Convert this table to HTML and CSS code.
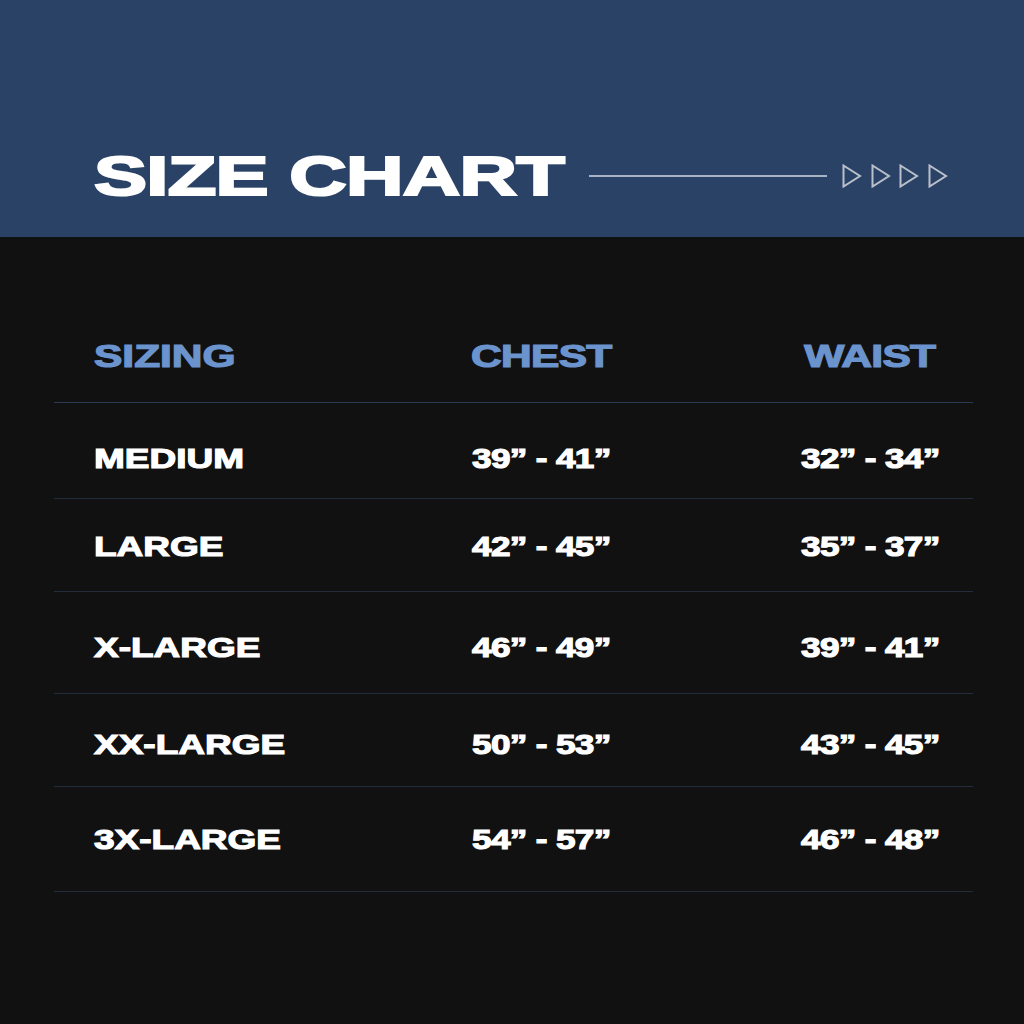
FILE: index.html
```html
<!DOCTYPE html>
<html lang="en">
<head>
<meta charset="utf-8">
<title>Size Chart</title>
<link rel="stylesheet" href="styles.css">
</head>
<body>
<div class="page">
  <header class="banner">
    <div class="title"><span class="wide">SIZE CHART</span></div>
    <div class="rule"></div>
    <svg class="arrows" width="110" height="24" viewBox="0 0 110 24" aria-hidden="true">
      <g fill="none" stroke="#b9c0cb" stroke-width="2" stroke-linejoin="miter">
        <polygon points="1.5,1.5 18,12 1.5,22.5"/>
        <polygon points="30.5,1.5 47,12 30.5,22.5"/>
        <polygon points="58.5,1.5 75,12 58.5,22.5"/>
        <polygon points="87.5,1.5 104,12 87.5,22.5"/>
      </g>
    </svg>
  </header>
  <section class="chart">
    <div class="row head">
      <div class="cell c1"><span class="wide">SIZING</span></div>
      <div class="cell c2"><span class="wide">CHEST</span></div>
      <div class="cell c3"><span class="wide">WAIST</span></div>
    </div>
    <div class="row">
      <div class="cell c1"><span class="wide">MEDIUM</span></div>
      <div class="cell c2"><span class="wide">39” - 41”</span></div>
      <div class="cell c3"><span class="wide">32” - 34”</span></div>
    </div>
    <div class="row">
      <div class="cell c1"><span class="wide">LARGE</span></div>
      <div class="cell c2"><span class="wide">42” - 45”</span></div>
      <div class="cell c3"><span class="wide">35” - 37”</span></div>
    </div>
    <div class="row">
      <div class="cell c1"><span class="wide">X-LARGE</span></div>
      <div class="cell c2"><span class="wide">46” - 49”</span></div>
      <div class="cell c3"><span class="wide">39” - 41”</span></div>
    </div>
    <div class="row">
      <div class="cell c1"><span class="wide">XX-LARGE</span></div>
      <div class="cell c2"><span class="wide">50” - 53”</span></div>
      <div class="cell c3"><span class="wide">43” - 45”</span></div>
    </div>
    <div class="row">
      <div class="cell c1"><span class="wide">3X-LARGE</span></div>
      <div class="cell c2"><span class="wide">54” - 57”</span></div>
      <div class="cell c3"><span class="wide">46” - 48”</span></div>
    </div>
  </section>
</div>
</body>
</html>
```

FILE: styles.css
```css
* { box-sizing: border-box; }
html, body { margin: 0; padding: 0; }
body {
  width: 1024px;
  height: 1024px;
  background: #111111;
  font-family: "Liberation Sans", Arial, sans-serif;
  font-weight: 700;
  color: #ffffff;
  overflow: hidden;
}
.page { width: 1024px; height: 1024px; background: #111111; }

.banner {
  height: 237px;
  background: #2a4265;
  display: flex;
  align-items: center;
  padding: 114px 0 0 94px;
}
.title {
  width: 495px;
  font-size: 56px;
  line-height: 56px;
  white-space: nowrap;
  letter-spacing: -0.5px;
  -webkit-text-stroke: 2.2px #ffffff;
}
.wide {
  display: inline-block;
  white-space: nowrap;
  transform: scaleX(1.42);
  transform-origin: left center;
}
.rule {
  width: 238px;
  height: 2px;
  background: #a9b4c6;
}
.arrows {
  margin-left: 15px;
  display: block;
}

.chart {
  margin-left: 54px;
  width: 919px;
}
.row {
  display: grid;
  grid-template-columns: 327px 240px 1fr;
  align-items: start;
  padding-left: 40px;
  border-bottom: 1px solid #222c3a;
  font-size: 27px;
  line-height: 27px;
  -webkit-text-stroke: 1.1px #ffffff;
}
.cell { white-space: nowrap; }
.c1 .wide { transform: scaleX(1.37); }
.c2 { text-align: center; }
.c3 { justify-self: end; width: 206px; text-align: center; }
.c2 .wide, .c3 .wide { transform-origin: center center; transform: scaleX(1.3); letter-spacing: -0.5px; }

.row.head {
  height: 166px;
  padding-top: 104px;
  font-size: 31px;
  line-height: 31px;
  color: #6b93cd;
  -webkit-text-stroke: 1.2px #6b93cd;
  border-bottom-color: #2b3856;
}
.row.head .wide { transform: scaleX(1.37); }
.row.head .c1 .wide { transform-origin: left center; }

.row:nth-child(2) { height: 96px; padding-top: 43px; }
.row:nth-child(3) { height: 93px; padding-top: 35px; }
.row:nth-child(4) { height: 102px; padding-top: 43px; }
.row:nth-child(5) { height: 93px; padding-top: 38px; }
.row:nth-child(6) { height: 105px; padding-top: 40px; }
```
